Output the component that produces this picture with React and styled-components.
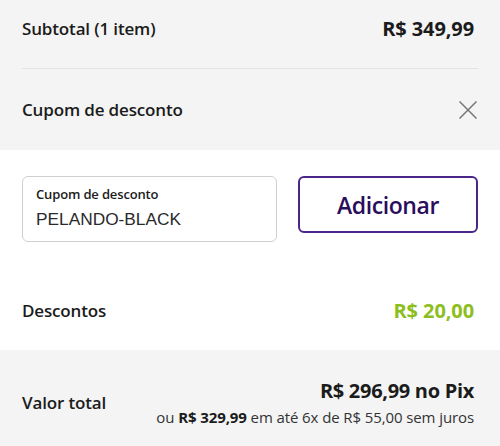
import styled, { createGlobalStyle } from 'styled-components';

const GlobalStyle = createGlobalStyle`
  body {
    margin: 0;
    background: #ffffff;
    font-family: 'Open Sans', 'Lato', sans-serif;
    color: #1b1b1b;
  }
`;

const Panel = styled.div`
  width: 500px;
  height: 446px;
  display: flex;
  flex-direction: column;
`;

const Section = styled.section`
  background: ${(p) => (p.$gray ? '#f4f4f4' : '#ffffff')};
  padding: ${(p) => p.$pad || '0 22px'};
  height: ${(p) => p.$height}px;
  box-sizing: border-box;
  display: flex;
  flex-direction: column;
`;

const Row = styled.div`
  display: flex;
  align-items: center;
  justify-content: space-between;
  height: ${(p) => p.$height}px;
  margin-top: ${(p) => p.$top || 0}px;
  padding-right: 4px;
`;

const Label = styled.span`
  font-size: 17px;
  font-weight: 600;
  letter-spacing: -0.15px;
  color: #1b1b1b;
`;

const Amount = styled.span`
  font-size: 20px;
  font-weight: 700;
  letter-spacing: -0.1px;
  color: ${(p) => p.$color || '#1b1b1b'};
`;

const Divider = styled.hr`
  border: 0;
  height: 1px;
  background: #e3e3e3;
  margin: 12px 0 0;
`;

const CloseButton = styled.button`
  border: 0;
  background: none;
  padding: 0;
  width: 18px;
  height: 18px;
  margin-right: -3px;
  display: flex;
  cursor: pointer;
`;

const CouponRow = styled.div`
  display: flex;
  gap: 21px;
  align-items: flex-start;
`;

const Field = styled.label`
  width: 255px;
  height: 66px;
  box-sizing: border-box;
  border: 1px solid #cfcfcf;
  border-radius: 6px;
  padding: 9px 13px 0;
  display: flex;
  flex-direction: column;
`;

const FieldLabel = styled.span`
  font-size: 13px;
  font-weight: 600;
  letter-spacing: -0.15px;
  color: #1b1b1b;
  line-height: 17px;
`;

const FieldInput = styled.input`
  border: 0;
  outline: none;
  padding: 0;
  margin-top: 6px;
  font-family: 'Liberation Sans', Arial, sans-serif;
  font-size: 17.3px;
  color: #2a2a2a;
  background: transparent;
`;

const AddButton = styled.button`
  flex: 1;
  height: 57px;
  border: 2px solid #4a2688;
  border-radius: 6px;
  background: #ffffff;
  color: #2a0e5c;
  font-family: 'Open Sans', sans-serif;
  font-size: 23px;
  font-weight: 600;
  letter-spacing: -0.4px;
  cursor: pointer;
`;

const TotalRow = styled.div`
  display: flex;
  align-items: center;
  justify-content: space-between;
  height: 96px;
  padding-right: 4px;
`;

const TotalInfo = styled.div`
  display: flex;
  flex-direction: column;
  align-items: flex-end;
  margin-top: 11px;
`;

const PixPrice = styled.span`
  font-size: 20px;
  font-weight: 700;
  letter-spacing: -0.3px;
  line-height: 24px;
`;

const Installments = styled.span`
  font-size: 15px;
  color: #333333;
  letter-spacing: -0.1px;
  line-height: 22px;
  margin-top: 3px;

  b {
    font-weight: 700;
    color: #1b1b1b;
  }
`;

const TotalLabel = styled(Label)`
  margin-top: 8px;
`;

const XIcon = () => (
  <svg width="18" height="18" viewBox="0 0 18 18" fill="none" stroke="#777" strokeWidth="1.5">
    <path d="M0.5 0.5 L17.5 17.5 M17.5 0.5 L0.5 17.5" />
  </svg>
);

export default function App() {
  return (
    <>
      <GlobalStyle />
      <Panel>
        <Section $gray $height={150}>
          <Row $height={56}>
            <Label>Subtotal (1 item)</Label>
            <Amount>R$ 349,99</Amount>
          </Row>
          <Divider />
          <Row $height={81}>
            <Label>Cupom de desconto</Label>
            <CloseButton aria-label="Fechar">
              <XIcon />
            </CloseButton>
          </Row>
        </Section>
        <Section $height={200} $pad="26px 22px 0">
          <CouponRow>
            <Field>
              <FieldLabel>Cupom de desconto</FieldLabel>
              <FieldInput defaultValue="PELANDO-BLACK" />
            </Field>
            <AddButton>Adicionar</AddButton>
          </CouponRow>
          <Row $height={80} $top={28}>
            <Label>Descontos</Label>
            <Amount $color="#8cbe1e">R$ 20,00</Amount>
          </Row>
        </Section>
        <Section $gray $height={96}>
          <TotalRow>
            <TotalLabel>Valor total</TotalLabel>
            <TotalInfo>
              <PixPrice>R$ 296,99 no Pix</PixPrice>
              <Installments>
                ou <b>R$ 329,99</b> em até 6x de R$ 55,00 sem juros
              </Installments>
            </TotalInfo>
          </TotalRow>
        </Section>
      </Panel>
    </>
  );
}
